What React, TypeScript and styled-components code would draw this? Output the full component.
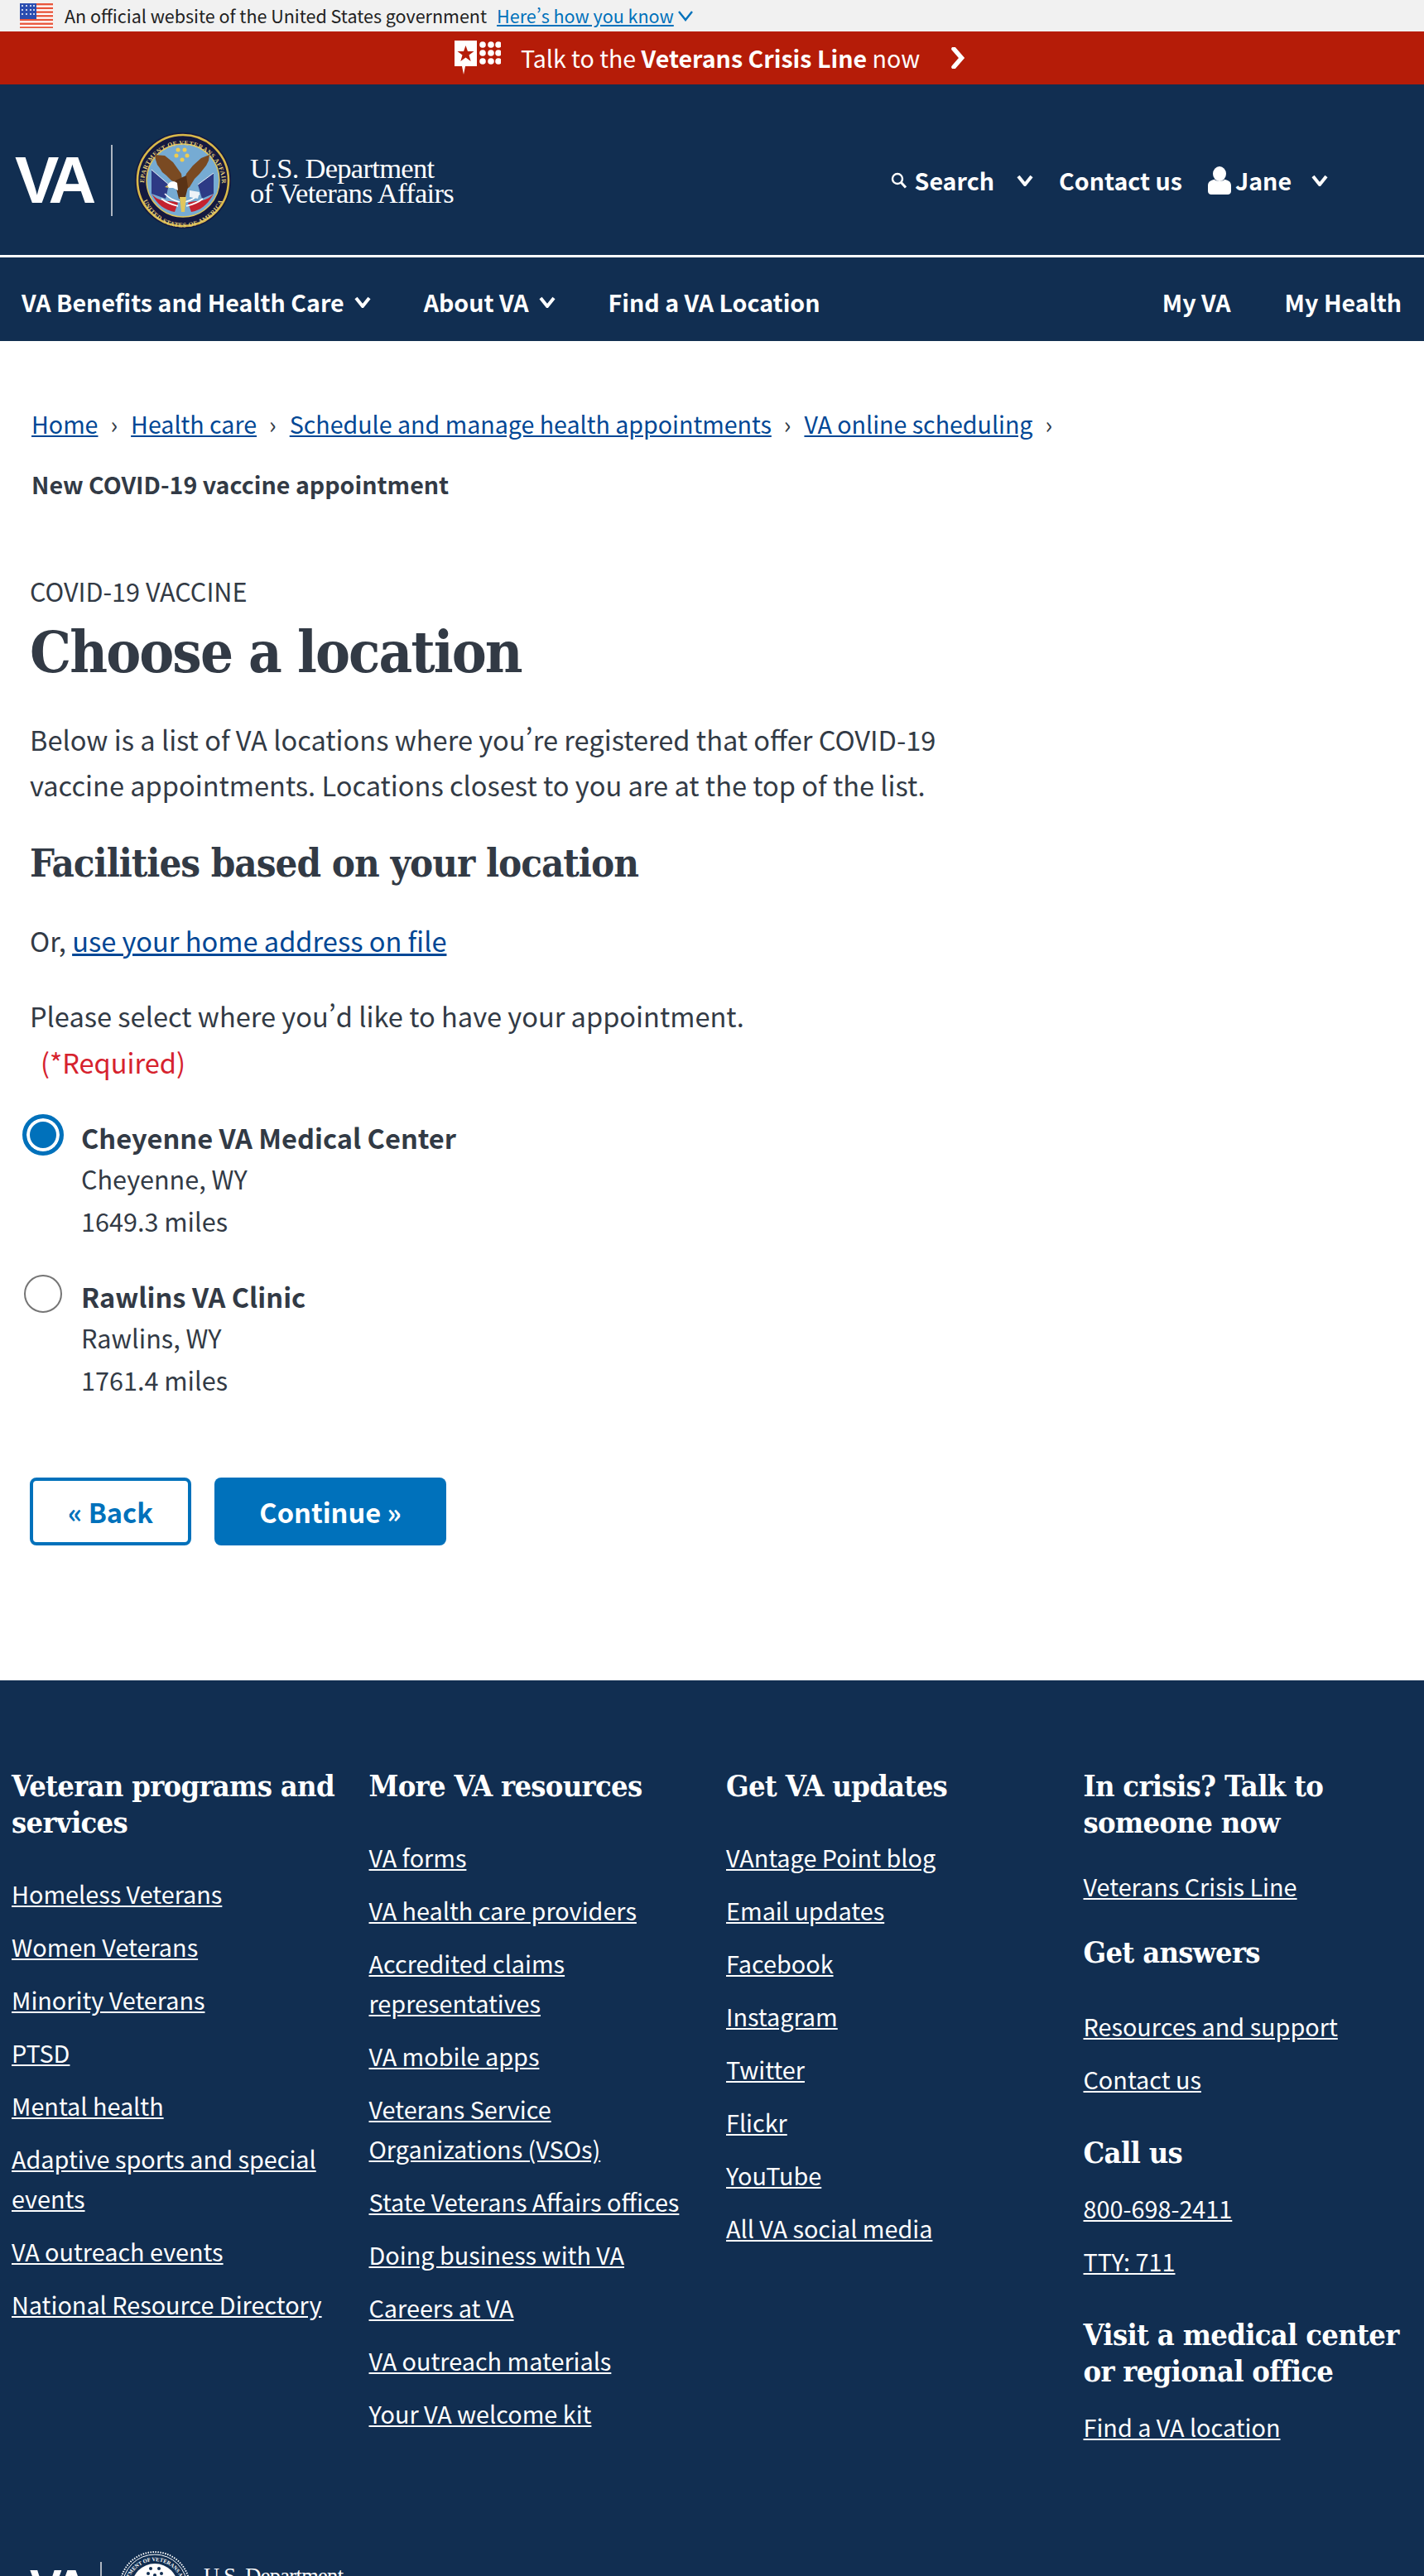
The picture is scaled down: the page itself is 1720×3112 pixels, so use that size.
import React from "react";
import styled, { createGlobalStyle } from "styled-components";

const NAVY = "#112e51";
const INK = "#323a45";
const BLUE = "#0071bb";
const LINK = "#004795";
const SANS = `"Noto Sans CJK SC", "Source Sans Pro", "Noto Sans", sans-serif`;
const SLAB = `"DejaVu Serif Condensed", "DejaVu Serif", serif`;

const Global = createGlobalStyle`
  html, body { margin: 0; padding: 0; background: #fff; }
  body { font-family: ${SANS}; font-size: 32.6px; color: ${INK}; font-feature-settings: "pwid"; }
  * { box-sizing: border-box; }
  h1, h2, p, ul, ol { margin: 0; padding: 0; }
  ul, ol { list-style: none; }
  svg { display: block; }
`;

const Page = styled.div`
  width: 1720px;
  height: 3112px;
  overflow: hidden;
`;

const GovBanner = styled.div`
  height: 38px;
  background: #f1f1f1;
  display: flex;
  align-items: center;
  padding-left: 24px;
  font-size: 21.5px;
  line-height: 38px;
  color: #212121;
`;
const BannerText = styled.span`
  margin-left: 14px;
`;
const BannerLink = styled.a`
  margin: 0 4px 0 12px;
  color: ${BLUE};
  text-decoration: underline;
`;

const CrisisBar = styled.div`
  height: 64px;
  background: #b51c08;
  color: #fff;
  display: flex;
  align-items: center;
  justify-content: center;
  font-size: 28.6px;
  line-height: 64px;
  padding-right: 5px;
`;
const CrisisText = styled.span`
  margin: 0 37px 0 24px;
  b { font-weight: 700; }
`;

const Masthead = styled.header`
  background: ${NAVY};
  height: 209px;
  border-bottom: 3px solid #fff;
  display: flex;
  align-items: center;
  justify-content: space-between;
  padding: 26px 116px 0 18px;
`;
const Brand = styled.div<{ $small?: boolean }>`
  display: flex;
  align-items: center;
  color: #fff;
`;
const VAMark = styled.span<{ $small?: boolean }>`
  font-family: "Liberation Sans", Arial, sans-serif;
  font-weight: 700;
  font-size: ${(p) => (p.$small ? 58 : 80)}px;
  line-height: 1;
  letter-spacing: ${(p) => (p.$small ? -5 : -7)}px;
  width: ${(p) => (p.$small ? 85 : 116)}px;
`;
const BrandRule = styled.span<{ $small?: boolean }>`
  width: 2px;
  height: ${(p) => (p.$small ? 60 : 86)}px;
  background: #aeb6c1;
`;
const SealSlot = styled.span<{ $small?: boolean }>`
  display: flex;
  margin: 0 ${(p) => (p.$small ? 15 : 23)}px 0 ${(p) => (p.$small ? 20 : 27)}px;
`;
const BrandName = styled.span<{ $small?: boolean }>`
  font-family: "Liberation Serif", "Times New Roman", serif;
  font-size: ${(p) => (p.$small ? 26.5 : 34.5)}px;
  line-height: ${(p) => (p.$small ? 26 : 30)}px;
  letter-spacing: -0.7px;
  white-space: nowrap;
`;

const Utility = styled.div`
  display: flex;
  align-items: center;
  color: #fff;
  font-weight: 700;
  font-size: 28.6px;
  line-height: 44px;
`;
const UtilityItem = styled.span<{ $gap: number; $after?: number }>`
  display: flex;
  align-items: center;
  gap: ${(p) => p.$gap}px;
  margin-right: ${(p) => p.$after ?? 0}px;
`;
const TrailingChevron = styled.span<{ $lead: number }>`
  display: flex;
  margin-left: ${(p) => p.$lead}px;
`;

const NavBar = styled.nav`
  background: ${NAVY};
  height: 101px;
  display: flex;
  align-items: center;
  justify-content: space-between;
  padding: 6px 27px 0 26px;
  color: #fff;
  font-weight: 700;
  font-size: 28.6px;
  line-height: 44px;
`;
const NavGroup = styled.div<{ $gap: number }>`
  display: flex;
  align-items: center;
  gap: ${(p) => p.$gap}px;
`;
const NavItem = styled.span`
  display: flex;
  align-items: center;
  gap: 12px;
`;

const Main = styled.main`
  padding: 63px 36px 163px;
`;
const Crumbs = styled.ol`
  display: flex;
  flex-wrap: wrap;
  width: 1300px;
  padding-left: 2px;
  line-height: 73px;
`;
const Crumb = styled.li<{ $current?: boolean }>`
  display: flex;
  flex-basis: ${(p) => (p.$current ? "100%" : "auto")};
  font-weight: ${(p) => (p.$current ? 700 : 400)};
  font-size: 28.6px;
`;
const CrumbSep = styled.span`
  margin: 0 16px 0 15px;
`;
const TextLink = styled.a`
  color: ${LINK};
  text-decoration: underline;
`;

const Eyebrow = styled.p`
  margin-top: 70px;
  font-size: 30.6px;
  line-height: 46px;
  text-transform: uppercase;
`;
const Title = styled.h1`
  margin-top: 6px;
  font-family: ${SLAB};
  font-weight: 700;
  font-size: 70px;
  letter-spacing: -1.9px;
  line-height: 90px;
`;
const Lead = styled.p`
  margin-top: 32px;
  width: 1200px;
  line-height: 55px;
`;
const Subtitle = styled.h2`
  margin-top: 38px;
  font-family: ${SLAB};
  font-weight: 700;
  font-size: 47px;
  letter-spacing: -1px;
  line-height: 60px;
`;
const Body = styled.p<{ $top: number }>`
  margin-top: ${(p) => p.$top}px;
  line-height: 56px;
`;
const Required = styled.p`
  padding-left: 13px;
  line-height: 56px;
  color: #d6222e;
`;

const Options = styled.ul`
  margin: 37px 0 0 -9px;
  display: flex;
  flex-direction: column;
  gap: 39px;
`;
const Option = styled.li`
  display: flex;
  gap: 21px;
  line-height: 51px;
`;
const RadioSlot = styled.span`
  width: 50px;
  height: 50px;
  margin-top: -2px;
  display: flex;
  align-items: center;
  justify-content: center;
`;
const Radio = styled.span<{ $on?: boolean }>`
  display: block;
  width: ${(p) => (p.$on ? 50 : 46)}px;
  height: ${(p) => (p.$on ? 50 : 46)}px;
  border-radius: 50%;
  background: ${(p) => (p.$on ? BLUE : "#fff")};
  border: ${(p) => (p.$on ? `5px solid ${BLUE}` : "2px solid #757575")};
  box-shadow: ${(p) => (p.$on ? "inset 0 0 0 4px #fff" : "none")};
`;
const OptionName = styled.strong`
  display: block;
  font-weight: 700;
`;
const OptionLine = styled.span`
  display: block;
  font-size: 30.6px;
`;

const Actions = styled.div`
  margin-top: 92px;
  display: flex;
  gap: 28px;
`;
const Button = styled.button<{ $outline?: boolean }>`
  height: 82px;
  width: ${(p) => (p.$outline ? 195 : 280)}px;
  border-radius: 8px;
  border: ${(p) => (p.$outline ? `4px solid ${BLUE}` : "none")};
  background: ${(p) => (p.$outline ? "#fff" : BLUE)};
  color: ${(p) => (p.$outline ? BLUE : "#fff")};
  font-family: ${SANS};
  font-feature-settings: "pwid";
  font-size: 32.6px;
  font-weight: 700;
  line-height: 44px;
  padding: 0;
`;

const Footer = styled.footer`
  background: ${NAVY};
  color: #fff;
  padding: 105px 0 0 14px;
  height: 1200px;
`;
const FooterGrid = styled.div`
  display: grid;
  grid-template-columns: repeat(4, 431.5px);
  height: 946px;
`;
const FooterCol = styled.div`
  display: flex;
  flex-direction: column;
  padding-right: 30px;
`;
const FooterHead = styled.h2<{ $top?: number; $after?: number }>`
  margin-top: ${(p) => p.$top ?? 0}px;
  margin-bottom: ${(p) => p.$after ?? 41}px;
  font-family: ${SLAB};
  font-weight: 700;
  font-size: 36px;
  letter-spacing: -0.7px;
  line-height: 44px;
`;
const FooterLinks = styled.ul`
  display: flex;
  flex-direction: column;
  gap: 16px;
  font-size: 28.8px;
  line-height: 48px;
  a {
    color: #fff;
    text-decoration: underline;
  }
`;
const FooterBrand = styled.div`
  padding-left: 22px;
`;

const Chevron = ({ size = 20, width = 4, color = "#fff" }: { size?: number; width?: number; color?: string }) => (
  <svg width={size} height={size * 0.7} viewBox="0 0 20 14" fill="none">
    <path d="M2 2 L10 12 L18 2" stroke={color} strokeWidth={width * (20 / size)} />
  </svg>
);

const UsFlag = () => (
  <svg width="40" height="30" viewBox="0 0 40 30">
    <rect width="40" height="30" fill="#fff" />
    {[0, 1, 2, 3, 4, 5, 6].map((i) => (
      <rect key={i} y={i * 4.7} width="40" height="2.4" fill="#e8563c" />
    ))}
    <rect width="20" height="19" fill="#2a4db0" />
    {[3, 8, 13].map((y) =>
      [3, 8, 13, 17].map((x) => <circle key={`${x}-${y}`} cx={x} cy={y} r="1" fill="#fff" />)
    )}
  </svg>
);

const CrisisIcon = () => (
  <svg width="56" height="42" viewBox="0 0 56 42">
    <path d="M0 0 H27 V31 H13 L11 41 L9 31 H0 Z" fill="#fff" />
    <path
      d="M13.5 6 L16 13 L23.5 13 L17.5 17.5 L19.7 25 L13.5 20.4 L7.3 25 L9.5 17.5 L3.5 13 L11 13 Z"
      fill="#b51c08"
    />
    {[5, 15, 25].map((y) =>
      [34, 44, 53].map((x) => <circle key={`${x}-${y}`} cx={x} cy={y} r="3.8" fill="#fff" />)
    )}
  </svg>
);

const ArrowRight = () => (
  <svg width="18" height="26" viewBox="0 0 18 26" fill="none">
    <path d="M4 2 L13.5 13 L4 24" stroke="#fff" strokeWidth="5.5" strokeLinecap="round" />
  </svg>
);

const SearchIcon = () => (
  <svg width="20" height="20" viewBox="0 0 20 20" fill="none">
    <circle cx="8" cy="8" r="6" stroke="#fff" strokeWidth="2.4" />
    <path d="M12.5 12.5 L18 18.5" stroke="#fff" strokeWidth="3" />
  </svg>
);

const PersonIcon = () => (
  <svg width="28" height="34" viewBox="0 0 28 34" fill="#fff">
    <ellipse cx="14" cy="9" rx="8" ry="9" />
    <path d="M0 23 C0 18 5 16 8 16 C10 18 18 18 20 16 C23 16 28 18 28 23 V30 C28 32.5 26 34 24 34 H4 C2 34 0 32.5 0 30 Z" />
  </svg>
);

const Seal = () => (
  <svg width="116" height="116" viewBox="0 0 116 116">
    <defs>
      <path id="sealTop" d="M 11 62 A 47 47 0 0 1 105 62" />
      <path id="sealBottom" d="M 5.5 62 A 52.5 52.5 0 0 0 110.5 62" />
    </defs>
    <circle cx="58" cy="58" r="58" fill="#14193f" />
    <circle cx="58" cy="58" r="55" fill="none" stroke="#d9b94a" strokeWidth="2.6" />
    <circle cx="58" cy="58" r="44" fill="#76abd3" stroke="#e0c65c" strokeWidth="1.4" />
    <text fontFamily="Liberation Serif, serif" fontSize="7.6" fontWeight="700" fill="#e6cf7a" letterSpacing="0.5">
      <textPath href="#sealTop" startOffset="50%" textAnchor="middle">DEPARTMENT OF VETERANS AFFAIRS</textPath>
    </text>
    <text fontFamily="Liberation Serif, serif" fontSize="7.6" fontWeight="700" fill="#e6cf7a" letterSpacing="0.5">
      <textPath href="#sealBottom" startOffset="50%" textAnchor="middle">UNITED STATES OF AMERICA</textPath>
    </text>
    <path d="M20 45 L41 63 L37 80 L20 74 Z" fill="#2d3a85" />
    <path d="M95 49 L76 63 L81 80 L95 74 Z" fill="#2d3a85" />
    <path d="M20 45 L41 63 M95 49 L76 63" stroke="#e8eef3" strokeWidth="1" />
    <path d="M20 74 C30 86 42 81 52 85 L48 96 C36 94 27 87 20 74 Z" fill="#c4212f" />
    <path d="M95 74 C84 86 74 81 64 85 L68 96 C80 94 88 87 95 74 Z" fill="#c4212f" />
    <path d="M36 74 C42 80 46 82 54 84 M78 74 C72 80 68 82 60 84 M32 80 C38 85 44 87 52 89 M82 80 C76 85 70 87 62 89" stroke="#fff" strokeWidth="1.7" fill="none" />
    <path d="M24 27 L36 28 L46 36 L56 50 L58 64 L52 62 L44 58 L38 52 L33 48 L30 43 L27 39 L25 33 Z" fill="#7a4a22" />
    <path d="M90 27 L80 31 L70 40 L62 50 L58 64 L60 70 L66 66 L72 56 L78 50 L82 45 L86 40 L89 34 Z" fill="#7a4a22" />
    <path d="M49 58 L62 52 L64 66 L60 82 L53 80 L50 68 Z" fill="#5a3316" />
    <path d="M39 64 C41 59 47 58 51 61 L52 70 L46 67 L41 67 Z" fill="#fff" />
    <path d="M39 64 L36 66 L41 67 Z" fill="#e0c65c" />
    <path d="M66 70 L78 72 L76 80 L66 78 Z" fill="#eef3f7" />
    <path d="M54 78 L62 78 L60 96 L56 96 Z" fill="#e0c65c" />
    {[[52, 21], [60, 21], [50, 28], [63, 28], [57, 33]].map(([x, y]) => (
      <circle key={`${x}-${y}`} cx={x} cy={y} r="2.5" fill="#f0cd4f" />
    ))}
  </svg>
);

const FooterSeal = () => (
  <svg width="88" height="88" viewBox="0 0 88 88">
    <defs>
      <path id="footSeal" d="M 11 46 A 33 33 0 0 1 77 46" />
    </defs>
    <circle cx="44" cy="44" r="42" fill="none" stroke="#fff" strokeWidth="2" strokeDasharray="1.5 1.5" />
    <circle cx="44" cy="44" r="39" fill="#112e51" stroke="#fff" strokeWidth="1" />
    <circle cx="44" cy="44" r="28" fill="#fff" />
    <text fontFamily="Liberation Serif, serif" fontSize="6.5" fontWeight="700" fill="#fff">
      <textPath href="#footSeal" startOffset="50%" textAnchor="middle">DEPARTMENT OF VETERANS AFFAIRS</textPath>
    </text>
    {[[39, 22], [49, 22], [36, 28], [52, 28], [44, 30]].map(([x, y]) => (
      <circle key={`${x}-${y}`} cx={x} cy={y} r="2" fill="#112e51" />
    ))}
  </svg>
);

const LinkList = ({ items }: { items: string[] }) => (
  <FooterLinks>
    {items.map((t) => (
      <li key={t}>
        <a href="#">{t}</a>
      </li>
    ))}
  </FooterLinks>
);

export default function App() {
  return (
    <Page>
      <Global />
      <GovBanner>
        <UsFlag />
        <BannerText>An official website of the United States government</BannerText>
        <BannerLink href="#">Here’s how you know</BannerLink>
        <Chevron size={20} width={2.4} color={BLUE} />
      </GovBanner>
      <CrisisBar>
        <CrisisIcon />
        <CrisisText>
          Talk to the <b>Veterans Crisis Line</b> now
        </CrisisText>
        <ArrowRight />
      </CrisisBar>
      <Masthead>
        <Brand>
          <VAMark>VA</VAMark>
          <BrandRule />
          <SealSlot>
            <Seal />
          </SealSlot>
          <BrandName>
            U.S. Department
            <br />
            of Veterans Affairs
          </BrandName>
        </Brand>
        <Utility>
          <UtilityItem $gap={9} $after={31}>
            <SearchIcon />
            <span>Search</span>
            <TrailingChevron $lead={18}>
              <Chevron />
            </TrailingChevron>
          </UtilityItem>
          <UtilityItem $gap={0} $after={31}>
            Contact us
          </UtilityItem>
          <UtilityItem $gap={5}>
            <PersonIcon />
            <span>Jane</span>
            <TrailingChevron $lead={19}>
              <Chevron />
            </TrailingChevron>
          </UtilityItem>
        </Utility>
      </Masthead>
      <NavBar>
        <NavGroup $gap={64}>
          <NavItem>
            VA Benefits and Health Care <Chevron />
          </NavItem>
          <NavItem>
            About VA <Chevron />
          </NavItem>
          <NavItem>Find a VA Location</NavItem>
        </NavGroup>
        <NavGroup $gap={65}>
          <NavItem>My VA</NavItem>
          <NavItem>My Health</NavItem>
        </NavGroup>
      </NavBar>
      <Main>
        <Crumbs>
          {["Home", "Health care", "Schedule and manage health appointments", "VA online scheduling"].map((c) => (
            <Crumb key={c}>
              <TextLink href="#">{c}</TextLink>
              <CrumbSep>›</CrumbSep>
            </Crumb>
          ))}
          <Crumb $current>New COVID-19 vaccine appointment</Crumb>
        </Crumbs>
        <Eyebrow>COVID-19 vaccine</Eyebrow>
        <Title>Choose a location</Title>
        <Lead>
          Below is a list of VA locations where you’re registered that offer COVID-19 vaccine appointments. Locations
          closest to you are at the top of the list.
        </Lead>
        <Subtitle>Facilities based on your location</Subtitle>
        <Body $top={35}>
          Or, <TextLink href="#">use your home address on file</TextLink>
        </Body>
        <Body $top={35}>Please select where you’d like to have your appointment.</Body>
        <Required>(*Required)</Required>
        <Options>
          <Option>
            <RadioSlot>
              <Radio $on />
            </RadioSlot>
            <div>
              <OptionName>Cheyenne VA Medical Center</OptionName>
              <OptionLine>Cheyenne, WY</OptionLine>
              <OptionLine>1649.3 miles</OptionLine>
            </div>
          </Option>
          <Option>
            <RadioSlot>
              <Radio />
            </RadioSlot>
            <div>
              <OptionName>Rawlins VA Clinic</OptionName>
              <OptionLine>Rawlins, WY</OptionLine>
              <OptionLine>1761.4 miles</OptionLine>
            </div>
          </Option>
        </Options>
        <Actions>
          <Button $outline>« Back</Button>
          <Button>Continue »</Button>
        </Actions>
      </Main>
      <Footer>
        <FooterGrid>
          <FooterCol>
            <FooterHead>Veteran programs and services</FooterHead>
            <LinkList
              items={[
                "Homeless Veterans",
                "Women Veterans",
                "Minority Veterans",
                "PTSD",
                "Mental health",
                "Adaptive sports and special events",
                "VA outreach events",
                "National Resource Directory",
              ]}
            />
          </FooterCol>
          <FooterCol>
            <FooterHead>More VA resources</FooterHead>
            <LinkList
              items={[
                "VA forms",
                "VA health care providers",
                "Accredited claims representatives",
                "VA mobile apps",
                "Veterans Service Organizations (VSOs)",
                "State Veterans Affairs offices",
                "Doing business with VA",
                "Careers at VA",
                "VA outreach materials",
                "Your VA welcome kit",
              ]}
            />
          </FooterCol>
          <FooterCol>
            <FooterHead>Get VA updates</FooterHead>
            <LinkList
              items={[
                "VAntage Point blog",
                "Email updates",
                "Facebook",
                "Instagram",
                "Twitter",
                "Flickr",
                "YouTube",
                "All VA social media",
              ]}
            />
          </FooterCol>
          <FooterCol>
            <FooterHead $after={32}>In crisis? Talk to someone now</FooterHead>
            <LinkList items={["Veterans Crisis Line"]} />
            <FooterHead $top={33} $after={44}>Get answers</FooterHead>
            <LinkList items={["Resources and support", "Contact us"]} />
            <FooterHead $top={42} $after={22}>Call us</FooterHead>
            <LinkList items={["800-698-2411", "TTY: 711"]} />
            <FooterHead $top={42} $after={22}>Visit a medical center or regional office</FooterHead>
            <LinkList items={["Find a VA location"]} />
          </FooterCol>
        </FooterGrid>
        <FooterBrand>
          <Brand $small>
            <VAMark $small>VA</VAMark>
            <BrandRule $small />
            <SealSlot $small>
              <FooterSeal />
            </SealSlot>
            <BrandName $small>
              U.S. Department
              <br />
              of Veterans Affairs
            </BrandName>
          </Brand>
        </FooterBrand>
      </Footer>
    </Page>
  );
}
